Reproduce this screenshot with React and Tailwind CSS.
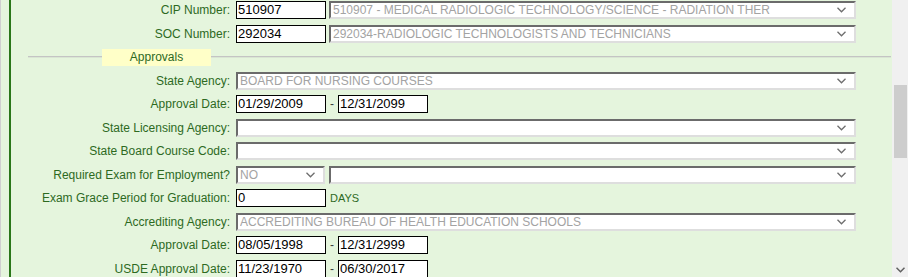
import React from "react";

const font = { fontFamily: '"Liberation Sans", Arial, sans-serif' };

function Chevron({ className = "" }) {
  return (
    <svg width="9" height="6" viewBox="0 0 9 6" className={className}>
      <path d="M0.5 0.8 L4.5 4.8 L8.5 0.8" fill="none" stroke="#6e6e6e" strokeWidth="1.3" />
    </svg>
  );
}

function Label({ children }) {
  return <div className="w-[219px] mr-[6px] shrink-0 text-right text-[12px] text-[#2d6a1f]">{children}</div>;
}

function TextBox({ value }) {
  return (
    <div className="h-[18px] w-[90px] shrink-0 border border-black bg-white pl-[1px] text-[13px] leading-[16px] text-black">
      {value}
    </div>
  );
}

function Select({ value = "", className = "" }) {
  return (
    <div className={`h-[18px] flex items-center justify-between border-2 border-t-[#6b6b6b] border-l-[#6b6b6b] border-r-[#dedede] border-b-[#dedede] bg-white pl-[2px] pr-[8px] ${className}`}>
      <span className="text-[12px] leading-[14px] text-[#a3a3a3] whitespace-nowrap overflow-hidden">{value}</span>
      <Chevron className="shrink-0" />
    </div>
  );
}

function Row({ label, children }) {
  return (
    <div className="flex items-center h-[23.5px]">
      <Label>{label}</Label>
      {children}
    </div>
  );
}

function DateRange({ from, to }) {
  return (
    <>
      <TextBox value={from} />
      <span className="w-[12px] text-center text-[12px] text-[#3b3b3b]">-</span>
      <TextBox value={to} />
    </>
  );
}

export default function App() {
  return (
    <div className="flex h-[277px] w-[908px] overflow-hidden bg-[#e5f5dd]" style={font}>
      <div className="flex flex-1 border-l border-[#cfcfcf] pl-[8px]">
        <div className="w-[2px] bg-[#2a7619]" />
        <div className="flex-1 mt-[-1.3px]">
          <Row label="CIP Number:">
            <TextBox value="510907" />
            <Select className="ml-[3px] w-[527px]" value="510907 - MEDICAL RADIOLOGIC TECHNOLOGY/SCIENCE - RADIATION THER" />
          </Row>
          <Row label="SOC Number:">
            <TextBox value="292034" />
            <Select className="ml-[3px] w-[527px]" value="292034-RADIOLOGIC TECHNOLOGISTS AND TECHNICIANS" />
          </Row>
          <div className="flex items-center h-[23.5px] ml-[17px]">
            <div className="w-[74px] h-[2px] border-t border-[#c4c4c4] border-b border-b-[#d9e6d3]" />
            <div className="w-[109px] h-[17px] bg-[#ffffc8] text-center text-[12px] leading-[17px] text-[#2d6a1f]">Approvals</div>
            <div className="flex-1 h-[2px] border-t border-[#c4c4c4] border-b border-b-[#d9e6d3] mr-[1px]" />
          </div>
          <Row label="State Agency:">
            <Select className="w-[620px]" value="BOARD FOR NURSING COURSES" />
          </Row>
          <Row label="Approval Date:">
            <DateRange from="01/29/2009" to="12/31/2099" />
          </Row>
          <Row label="State Licensing Agency:">
            <Select className="w-[620px]" />
          </Row>
          <Row label="State Board Course Code:">
            <Select className="w-[620px]" />
          </Row>
          <Row label="Required Exam for Employment?">
            <Select className="w-[89px]" value="NO" />
            <Select className="ml-[4px] w-[527px]" />
          </Row>
          <Row label="Exam Grace Period for Graduation:">
            <TextBox value="0" />
            <span className="ml-[4px] text-[11px] text-[#2d6a1f]">DAYS</span>
          </Row>
          <Row label="Accrediting Agency:">
            <Select className="w-[620px]" value="ACCREDITING BUREAU OF HEALTH EDUCATION SCHOOLS" />
          </Row>
          <Row label="Approval Date:">
            <DateRange from="08/05/1998" to="12/31/2999" />
          </Row>
          <Row label="USDE Approval Date:">
            <DateRange from="11/23/1970" to="06/30/2017" />
          </Row>
        </div>
      </div>
      <div className="w-[16px] shrink-0 bg-[#f0f0f0] flex flex-col items-center">
        <div className="mt-[85px] w-[13px] h-[73px] bg-[#cdcdcd] ml-[1px]" />
        <div className="flex-1" />
        <svg width="9" height="6" viewBox="0 0 9 6" className="mb-[4px]">
          <path d="M0.5 0.8 L4.5 4.8 L8.5 0.8" fill="none" stroke="#606060" strokeWidth="1.5" />
        </svg>
      </div>
    </div>
  );
}
